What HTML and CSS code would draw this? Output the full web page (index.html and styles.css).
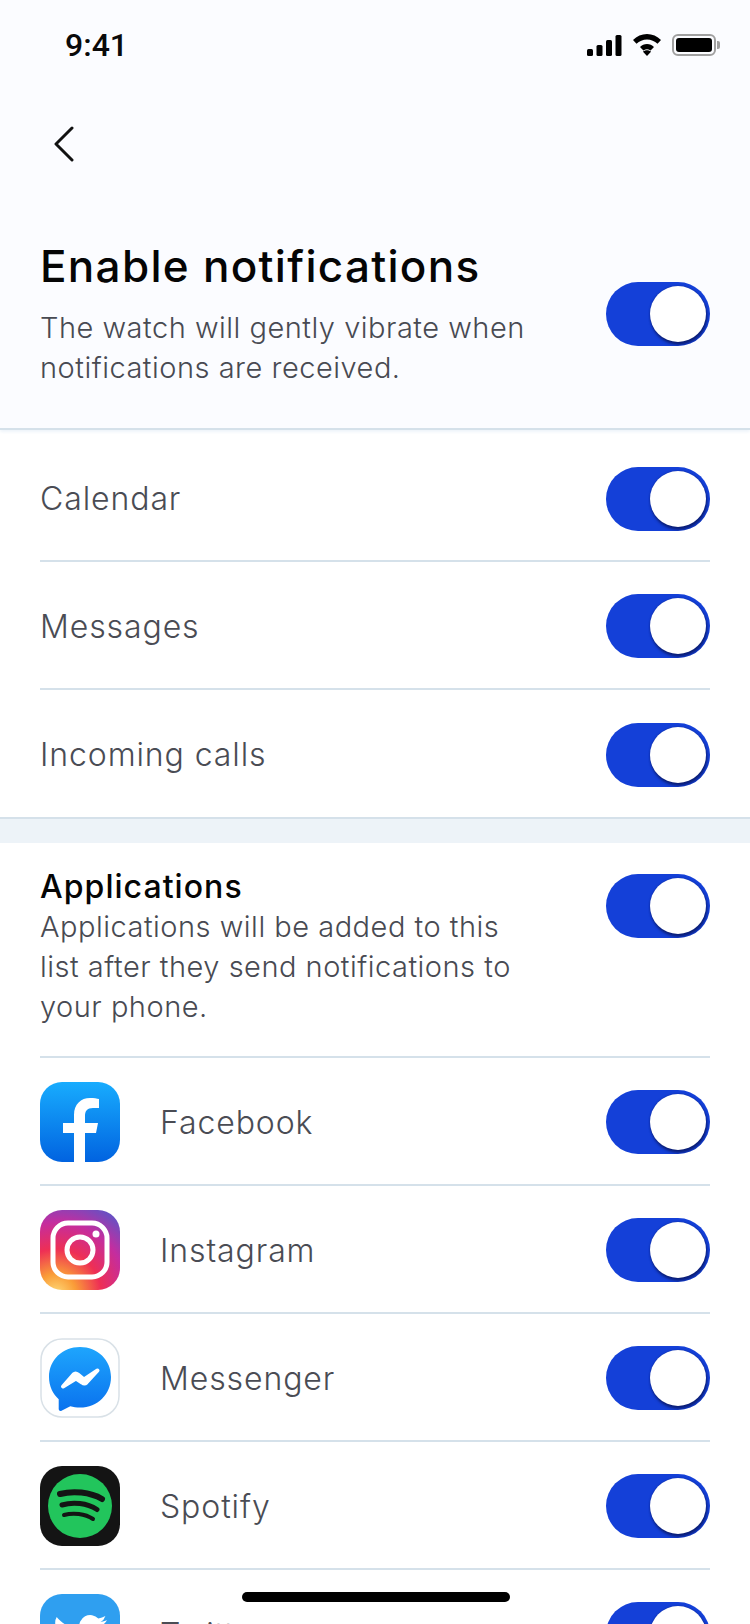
FILE: index.html
```html
<!DOCTYPE html>
<html>
<head>
    <title>Enable notifications</title>
    <link rel="stylesheet" href="styles.css">
</head>
<body>
    <div class="screen">
        <div class="top">
            <div class="status">
                <span class="time">9:41</span>
                <div class="status-icons">
                    <svg width="35" height="21" viewBox="0 0 35 21"><rect x="0" y="14" width="6" height="7" rx="1.5"/><rect x="9.500" y="10" width="6" height="11" rx="1.500"/><rect x="19" y="5" width="6" height="16" rx="1.500"/><rect x="28.500" y="0" width="6" height="21" rx="1.500"/></svg>
                    <svg width="32" height="22" viewBox="0 0 32 22"><path d="M16 5.500c-4 0-7.700 1.600-10.500 4.300L2 6C5.800 2.300 10.700 0 16 0s10.200 2.300 14 6l-3.500 3.800C23.700 7.100 20 5.500 16 5.500z"/><path d="M16 10.500c-2.700 0-5.200 1.100-7 2.900l3.400 3.700c-.1 0 1.400-1.400 3.600-1.400s3.700 1.400 3.600 1.400l3.400-3.700c-1.800-1.800-4.300-2.900-7-2.900z" transform="translate(0 -.5)"/><path d="M16 22l-4-4.300c1-1 2.500-1.500 4-1.500s3 .5 4 1.500z"/></svg>
                    <div class="battery"><div class="battery-fill"></div></div>
                </div>
            </div>
            <div class="nav">
                <svg class="back" width="24" height="36" viewBox="0 0 24 36"><path d="M20 2L4 18l16 16" fill="none" stroke="#111" stroke-width="3" stroke-linecap="round" stroke-linejoin="round"/></svg>
            </div>
            <div class="hero">
                <div class="hero-text">
                    <h1>Enable notifications</h1>
                    <p class="sub">The watch will gently vibrate when notifications are received.</p>
                </div>
                <div class="toggle"><span class="knob"></span></div>
            </div>
        </div>

        <div class="list first">
            <div class="row short"><span class="label">Calendar</span><div class="toggle"><span class="knob"></span></div></div>
            <div class="row"><span class="label">Messages</span><div class="toggle"><span class="knob"></span></div></div>
            <div class="row short last"><span class="label">Incoming calls</span><div class="toggle"><span class="knob"></span></div></div>
        </div>

        <div class="band"></div>

        <div class="list">
            <div class="apps-head">
                <div class="apps-text">
                    <h2>Applications</h2>
                    <p class="sub">Applications will be added to this list after they send notifications to your phone.</p>
                </div>
                <div class="toggle"><span class="knob"></span></div>
            </div>

            <div class="row">
                <svg class="app-icon" viewBox="0 0 80 80">
                    <defs><linearGradient id="fb" x1="0" y1="0" x2="0" y2="1"><stop offset="0" stop-color="#18acfe"/><stop offset="1" stop-color="#0163e0"/></linearGradient></defs>
                    <rect width="80" height="80" rx="22" fill="url(#fb)"/>
                    <path d="M34 80V51H23V41H34V33C34 22 41 16 50 16C54 16 57 16.500 59 17V26H53C47 26 45 29 45 34V41H58L56 51H45V80Z" fill="#fff"/>
                </svg>
                <span class="label">Facebook</span>
                <div class="toggle"><span class="knob"></span></div>
            </div>

            <div class="row">
                <svg class="app-icon" viewBox="0 0 80 80">
                    <defs><radialGradient id="ig" cx="0.2" cy="1.05" r="1.25"><stop offset="0" stop-color="#fedc7a"/><stop offset="0.2" stop-color="#fa9d38"/><stop offset="0.45" stop-color="#ee2f55"/><stop offset="0.72" stop-color="#c42d9f"/><stop offset="1" stop-color="#5a55c8"/></radialGradient></defs>
                    <rect width="80" height="80" rx="22" fill="url(#ig)"/>
                    <rect x="13" y="13" width="54" height="54" rx="15" fill="none" stroke="#fff" stroke-width="5"/>
                    <circle cx="40" cy="40" r="13" fill="none" stroke="#fff" stroke-width="5"/>
                    <circle cx="56" cy="24" r="3.500" fill="#fff"/>
                </svg>
                <span class="label">Instagram</span>
                <div class="toggle"><span class="knob"></span></div>
            </div>

            <div class="row">
                <svg class="app-icon" viewBox="0 0 80 80">
                    <defs><linearGradient id="ms" x1="0" y1="0" x2="0" y2="1"><stop offset="0" stop-color="#1ea5fd"/><stop offset="1" stop-color="#0a72ee"/></linearGradient></defs>
                    <rect x="1" y="1" width="78" height="78" rx="21" fill="#fff" stroke="#d9e1e7" stroke-width="1.500"/>
                    <path d="M40 9C22.500 9 9 21.800 9 39C9 48 12.700 55.800 18.700 61.200V71C18.700 72.500 20.200 73.400 21.500 72.800L30.300 68.300C33.300 69.100 36.600 69.600 40 69.600C57.500 69.600 71 56.200 71 39C71 21.800 57.500 9 40 9Z" fill="url(#ms)"/>
                    <path d="M23 48.500L33.500 36.500Q35.500 34.500 38 36.500L44 41.500L57.500 32.500L46.500 44.500Q44.500 46.500 42 44.500L36 40.500Z" fill="#fff" stroke="#fff" stroke-width="4" stroke-linejoin="round"/>
                </svg>
                <span class="label">Messenger</span>
                <div class="toggle"><span class="knob"></span></div>
            </div>

            <div class="row">
                <svg class="app-icon" viewBox="0 0 80 80">
                    <rect width="80" height="80" rx="22" fill="#141414"/>
                    <circle cx="40" cy="40" r="32" fill="#22c55c"/>
                    <g fill="none" stroke="#141414" stroke-linecap="round">
                        <path d="M20 28C33 24.500 50 26 62 33" stroke-width="6"/>
                        <path d="M22 39C33 35.500 47 37 57 43.500" stroke-width="5"/>
                        <path d="M24 49C33 46.500 45 47.500 53 53" stroke-width="4"/>
                    </g>
                </svg>
                <span class="label">Spotify</span>
                <div class="toggle"><span class="knob"></span></div>
            </div>

            <div class="row">
                <svg class="app-icon" viewBox="0 0 80 80">
                    <rect width="80" height="80" rx="22" fill="#2f9ff0"/>
                    <path transform="translate(13 16) scale(2.250)" d="M23.953 4.570a10 10 0 01-2.825.775 4.958 4.958 0 002.163-2.723c-.951.555-2.005.959-3.127 1.184a4.920 4.920 0 00-8.384 4.482C7.690 8.095 4.067 6.130 1.640 3.162a4.822 4.822 0 00-.666 2.475c0 1.710.870 3.213 2.188 4.096a4.904 4.904 0 01-2.228-.616v.060a4.923 4.923 0 003.946 4.827 4.996 4.996 0 01-2.212.085 4.936 4.936 0 004.604 3.417 9.867 9.867 0 01-6.102 2.105c-.390 0-.779-.023-1.170-.067a13.995 13.995 0 007.557 2.209c9.053 0 13.998-7.496 13.998-13.985 0-.210 0-.420-.015-.630A9.935 9.935 0 0024 4.590z" fill="#fff"/>
                </svg>
                <span class="label">Twitter</span>
                <div class="toggle"><span class="knob"></span></div>
            </div>
        </div>

        <div class="home-bar"></div>
    </div>
</body>
</html>
```

FILE: styles.css
```css
* {
    box-sizing: border-box;
}

body {
    margin: 0;
    background: #fff;
    font-family: Inter, "Liberation Sans", sans-serif;
}

.screen {
    position: relative;
    width: 750px;
    height: 1624px;
    overflow: hidden;
    background: #fff;
}

.top {
    position: relative;
    height: 430px;
    background: #fbfcff;
    border-bottom: 2px solid #d5e1ea;
    box-shadow: 0 2px 3px #eef4fa;
}

.status {
    display: flex;
    justify-content: space-between;
    align-items: center;
    height: 46px;
    padding: 22px 30px 0 65px;
    box-sizing: content-box;
}

.time {
    font-family: Roboto, sans-serif;
    font-weight: 500;
    font-size: 32px;
    color: #0a0a0a;
}

.status-icons {
    display: flex;
    align-items: center;
    gap: 9px;
}

.battery {
    position: relative;
    width: 44px;
    height: 22px;
    padding: 2px;
    border: 2px solid #a0a0a0;
    border-radius: 6px;
    margin-right: 4px;
}

.battery::after {
    content: "";
    position: absolute;
    right: -6px;
    top: 5px;
    width: 3px;
    height: 8px;
    background: #a0a0a0;
    border-radius: 0 2px 2px 0;
}

.battery-fill {
    height: 100%;
    background: #000;
    border-radius: 3px;
}

.nav {
    padding: 58px 0 0 52px;
    box-sizing: content-box;
    height: 36px;
}

.back {
    display: block;
}

.hero {
    display: flex;
    justify-content: space-between;
    align-items: flex-start;
    padding: 0 40px;
    margin-top: 78px;
}

h1 {
    margin: 0 0 16px;
    font-size: 44px;
    font-weight: 500;
    line-height: 52px;
    letter-spacing: 1.3px;
    color: #050505;
}

h2 {
    margin: 0;
    font-size: 32px;
    font-weight: 500;
    line-height: 40px;
    letter-spacing: 1.05px;
    color: #050505;
}

.sub {
    margin: 0;
    font-size: 29px;
    font-weight: 300;
    line-height: 40px;
    letter-spacing: 0.5px;
    color: #484a52;
}

.hero-text {
    width: 500px;
}

.hero .toggle {
    margin-top: 42px;
}

.list {
    padding: 0 40px;
    background: #fff;
}

.list.first {
    padding-top: 5px;
}

.row {
    display: flex;
    align-items: center;
    height: 128px;
    padding-top: 2px;
    border-bottom: 2px solid #d5e1ea;
}

.row.short {
    height: 127px;
}

.row.last {
    border-bottom: none;
}

.label {
    flex: 1;
    font-size: 32px;
    font-weight: 300;
    letter-spacing: 0.9px;
    color: #4a4c54;
}

.app-icon {
    width: 80px;
    height: 80px;
    flex: none;
    margin-right: 40px;
}

.toggle {
    flex: none;
    position: relative;
    width: 104px;
    height: 64px;
    border-radius: 32px;
    background: #1440d8;
    overflow: hidden;
}

.knob {
    position: absolute;
    top: 4px;
    right: 4px;
    width: 56px;
    height: 56px;
    border-radius: 50%;
    background: #fff;
    box-shadow: 1px 3px 3px rgba(8, 20, 90, 0.75), 0 0 2px rgba(8, 20, 90, 0.5);
}

.band {
    height: 26px;
    background: #edf3f8;
    border-top: 2px solid #d5e1ea;
}

.apps-head {
    display: flex;
    justify-content: space-between;
    align-items: flex-start;
    padding: 24px 0 0;
    height: 215px;
    border-bottom: 2px solid #d5e1ea;
}

.apps-text {
    width: 500px;
}

.apps-head .toggle {
    margin-top: 7px;
}

.home-bar {
    position: absolute;
    left: 242px;
    top: 1592px;
    width: 268px;
    height: 10px;
    border-radius: 5px;
    background: #000;
}
```
